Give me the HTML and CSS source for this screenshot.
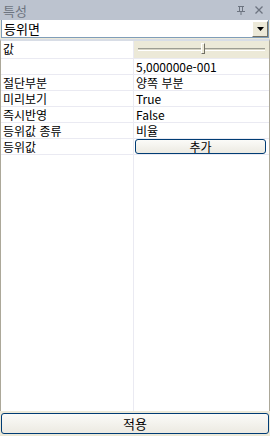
FILE: index.html
```html
<!DOCTYPE html>
<html lang="ko">
<head>
    <meta charset="UTF-8">
    <title>특성</title>
    <link rel="stylesheet" href="styles.css">
</head>
<body>
    <div class="panel">
        <div class="titlebar">
            <span class="title">특성</span>
            <span class="tools">
                <svg width="10" height="10" viewBox="0 0 10 10"><path d="M2 1.5h6M3.5 1.5v4.5M6.5 1.5v4.5M1 6.5h8M5 6.5v3.5" stroke="#6d7480" fill="none"/></svg>
                <svg width="10" height="10" viewBox="0 0 10 10"><path d="M1.5 1.5l7 7M8.5 1.5l-7 7" stroke="#6d7480" stroke-width="1.3" fill="none"/></svg>
            </span>
        </div>
        <div class="combo">
            <span class="combo-text">등위면</span>
            <span class="combo-btn"><svg width="7" height="4" viewBox="0 0 7 4"><path d="M0 0h7L3.5 4z" fill="#000"/></svg></span>
        </div>
        <div class="grid">
            <div class="row slider-row">
                <div class="cell name">값</div>
                <div class="cell value beige">
                    <div class="track"><span class="thumb"></span></div>
                </div>
            </div>
            <div class="row">
                <div class="cell name"></div>
                <div class="cell value">5,000000e-001</div>
            </div>
            <div class="row">
                <div class="cell name">절단부분</div>
                <div class="cell value">양쪽 부분</div>
            </div>
            <div class="row">
                <div class="cell name">미리보기</div>
                <div class="cell value">True</div>
            </div>
            <div class="row">
                <div class="cell name">즉시반영</div>
                <div class="cell value">False</div>
            </div>
            <div class="row">
                <div class="cell name">등위값 종류</div>
                <div class="cell value">비율</div>
            </div>
            <div class="row">
                <div class="cell name">등위값</div>
                <div class="cell value"><button class="btn small">추가</button></div>
            </div>
            <div class="row filler">
                <div class="cell name"></div>
                <div class="cell value"></div>
            </div>
        </div>
        <div class="footer">
            <button class="btn wide">적용</button>
        </div>
    </div>
</body>
</html>
```

FILE: styles.css
```css
* {
    box-sizing: border-box;
}
body {
    margin: 0;
    font-family: "Noto Sans CJK KR", "DejaVu Sans", sans-serif;
    font-size: 12px;
    color: #000;
    background: #ece9d8;
}
.panel {
    width: 270px;
    height: 436px;
    display: flex;
    flex-direction: column;
    background: #ece9d8;
}
.titlebar {
    height: 20px;
    background: #bcc3cf;
    display: flex;
    align-items: center;
    justify-content: space-between;
    padding: 0 6px 0 3px;
    color: #6d7480;
    font-size: 13px;
}
.tools {
    display: flex;
    gap: 8px;
}
.combo {
    height: 18px;
    margin: 0 1px;
    background: #fff;
    display: flex;
    align-items: center;
    justify-content: space-between;
    border: 1px solid #7f9db9;
    border-top: none;
}
.combo-text {
    padding-left: 2px;
    font-size: 13px;
    line-height: 16px;
}
.combo-btn {
    width: 16px;
    height: 16px;
    background: #ece9d8;
    border: 1px solid;
    border-color: #fff #716f64 #716f64 #fff;
    display: flex;
    align-items: center;
    justify-content: center;
}
.grid {
    flex: 1;
    margin-top: 1px;
    border-top: 2px solid #d8dde6;
    border-left: 1px solid #aca899;
    border-right: 1px solid #aca899;
    background: #fff;
    display: flex;
    flex-direction: column;
}
.row {
    display: flex;
    height: 16px;
    border-bottom: 1px solid #eaeaf2;
}
.slider-row {
    height: 18px;
}
.cell {
    line-height: 15px;
    padding-left: 2px;
    white-space: nowrap;
    overflow: hidden;
}
.name {
    width: 133px;
    border-right: 1px solid #eaeaf2;
}
.value {
    flex: 1;
}
.beige {
    background: #ece9d8;
    display: flex;
    align-items: center;
    padding: 0 4px;
}
.track {
    position: relative;
    flex: 1;
    height: 3px;
    border-top: 1px solid #9d9d92;
    border-bottom: 1px solid #fff;
    background: #d6d3c4;
}
.thumb {
    position: absolute;
    left: 63px;
    top: -6px;
    width: 4px;
    height: 11px;
    background: #ece9d8;
    border: 1px solid;
    border-color: #fff #716f64 #716f64 #fff;
}
.filler {
    flex: 1;
    border-bottom: none;
}
.btn {
    font-family: inherit;
    font-size: 12px;
    background: linear-gradient(#fbfbf8, #eceae2);
    border: 1px solid #003c74;
    border-radius: 3px;
    padding: 0;
    color: #000;
}
.btn.small {
    width: 131px;
    height: 15px;
    line-height: 13px;
    margin-left: -1px;
}
.footer {
    padding: 2px 1px 2px;
}
.btn.wide {
    width: 268px;
    height: 21px;
    font-size: 13px;
}
```
